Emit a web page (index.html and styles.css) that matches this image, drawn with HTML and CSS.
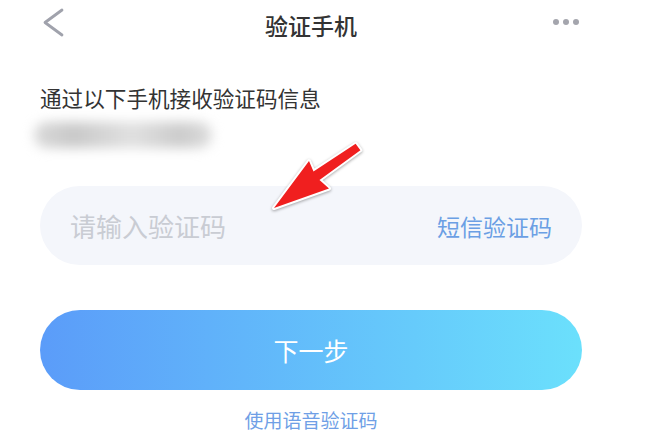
FILE: index.html
```html
<!DOCTYPE html>
<html lang="zh-CN">
<head>
    <meta charset="UTF-8">
    <meta name="viewport" content="width=device-width, initial-scale=1.0">
    <title>验证手机</title>
    <link rel="stylesheet" href="styles.css">
</head>
<body>
    <div class="screen">
        <div class="header">
            <svg class="back" width="30" height="38" viewBox="0 0 30 38">
                <polyline points="22,3 5,15.5 22,28" fill="none" stroke="#a0a2ac" stroke-width="2.8" stroke-linecap="round" stroke-linejoin="round"/>
            </svg>
            <div class="title">验证手机</div>
            <svg class="more" width="30" height="38" viewBox="0 0 30 38">
                <circle cx="4" cy="16" r="3" fill="#a4a5ad"/>
                <circle cx="14" cy="16" r="3" fill="#a4a5ad"/>
                <circle cx="24" cy="16" r="3" fill="#a4a5ad"/>
            </svg>
        </div>

        <div class="content">
            <p class="intro">通过以下手机接收验证码信息</p>
            <div class="phone"></div>

            <div class="code-field">
                <span class="placeholder">请输入验证码</span>
                <span class="sms">短信验证码</span>
            </div>

            <button class="next">下一步</button>
            <div class="voice">使用语音验证码</div>
        </div>
    </div>

    <!-- red annotation arrow -->
    <svg class="arrow" width="661" height="438" viewBox="0 0 661 438">
        <polygon points="274,208 309,161 313.5,171.5 355.6,143.8 360.4,150.2 319.5,180 329,188.5"
                 fill="#f01f1f" stroke="#ffffff" stroke-width="4" stroke-linejoin="round" paint-order="stroke"/>
    </svg>
</body>
</html>
```

FILE: styles.css
```css
* {
    margin: 0;
    padding: 0;
    box-sizing: border-box;
}

body {
    position: relative;
    width: 661px;
    height: 438px;
    overflow: hidden;
    background: #ffffff;
    font-family: "Noto Sans CJK SC", "Noto Sans", sans-serif;
}

.screen {
    width: 622px;
    padding: 0 40px;
}

.header {
    display: flex;
    justify-content: space-between;
    align-items: center;
    height: 50px;
}

.back {
    margin-top: 2px;
}

.title {
    font-size: 23px;
    font-weight: 500;
    color: #333333;
}

.intro {
    margin-top: 33px;
    font-size: 21.6px;
    line-height: 30px;
    color: #333333;
}

.phone {
    margin-top: 9px;
    margin-left: -6px;
    width: 178px;
    height: 26px;
    border-radius: 13px;
    background: linear-gradient(90deg, #dadada 0%, #c8c8c8 22%, #e0e0e0 55%, #cbcbcb 82%, #dddddd 100%);
    filter: blur(6px);
}

.code-field {
    display: flex;
    justify-content: space-between;
    align-items: center;
    margin-top: 38px;
    height: 79px;
    padding: 0 30px;
    border-radius: 40px;
    background: #f4f6fb;
}

.placeholder {
    font-size: 26px;
    color: #c9ccd3;
}

.sms {
    font-size: 23px;
    color: #6b9fe4;
}

.next {
    display: block;
    width: 100%;
    height: 80px;
    margin-top: 45px;
    border: none;
    border-radius: 40px;
    background: linear-gradient(90deg, #5b9cf9, #6be0fc);
    color: #ffffff;
    font-family: inherit;
    font-size: 25px;
}

.voice {
    margin-top: 18px;
    text-align: center;
    font-size: 19px;
    line-height: 24px;
    color: #6f9fe6;
}

.arrow {
    position: absolute;
    top: 0;
    left: 0;
    pointer-events: none;
    filter: drop-shadow(0 1px 1.5px rgba(0, 0, 0, 0.35));
}
```
